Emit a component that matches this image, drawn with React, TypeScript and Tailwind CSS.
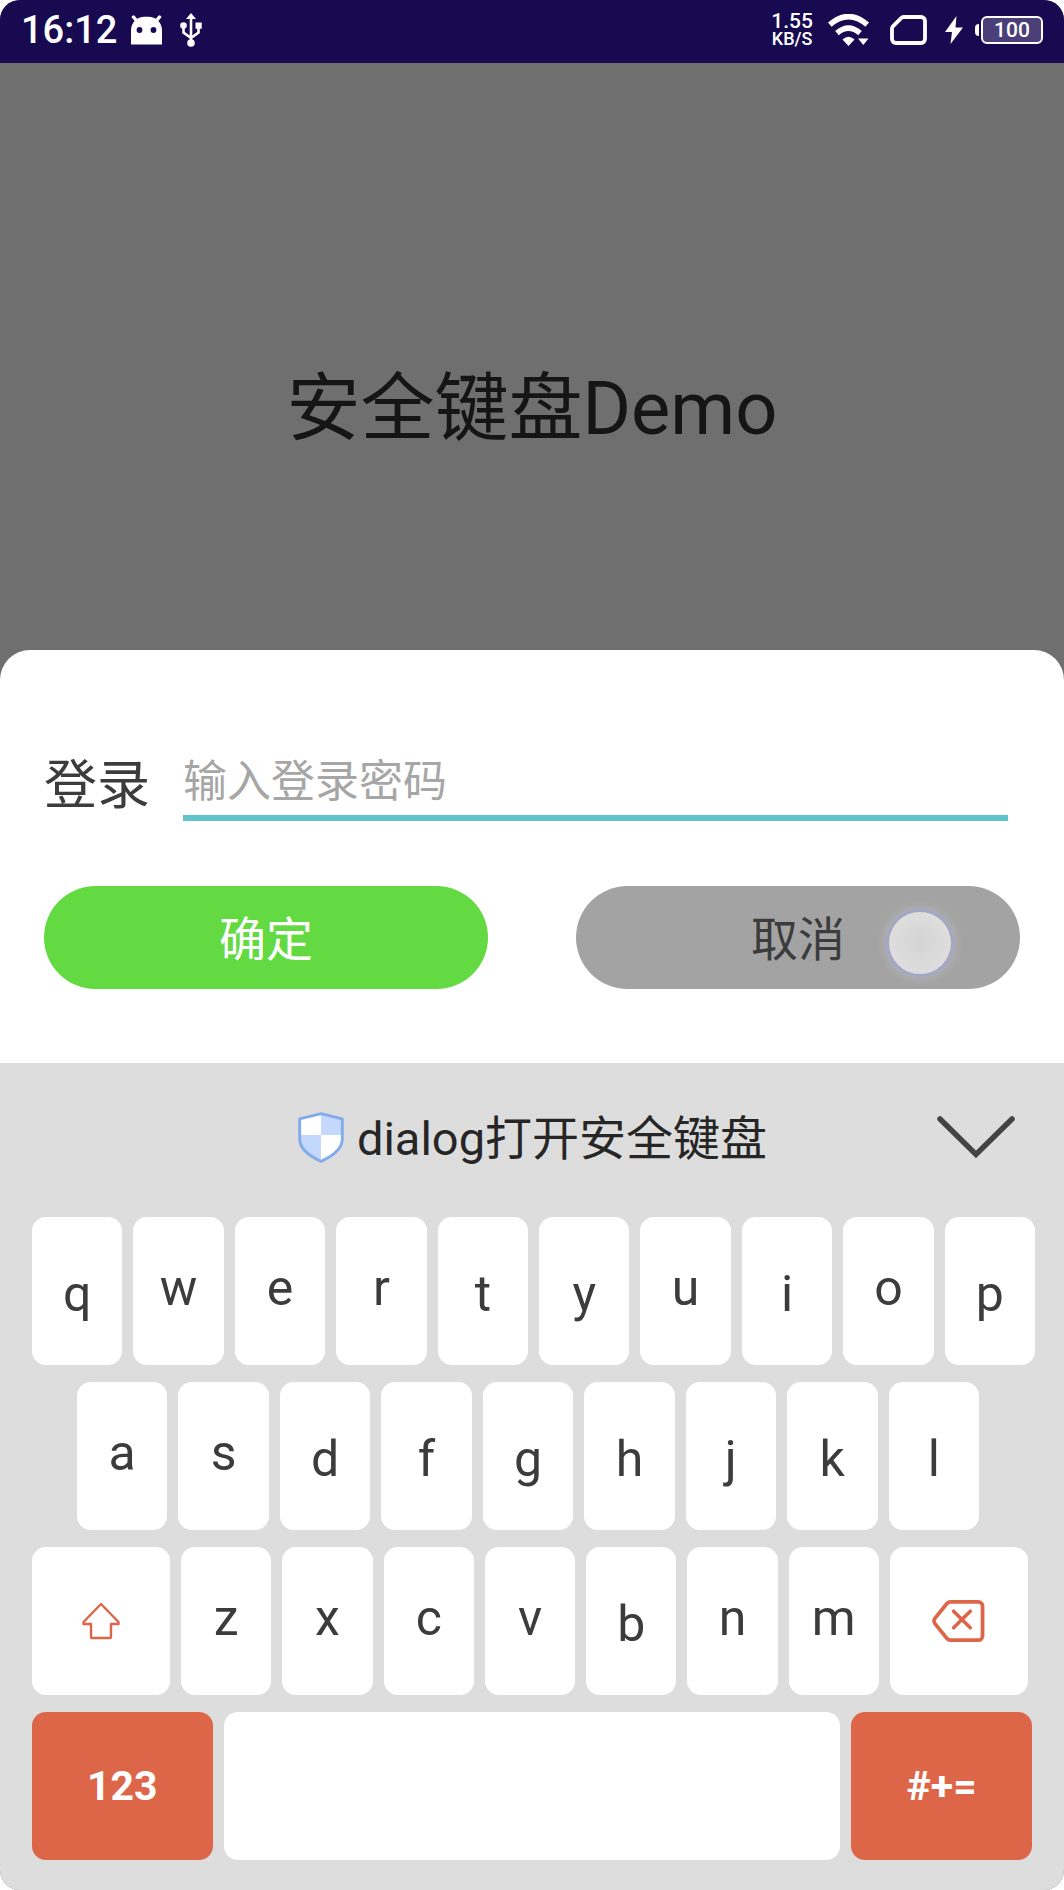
import type { ReactNode } from "react";

const TALL = "qtyipdfghjklb";

function Key({ children, className, label }: { children?: ReactNode; className?: string; label?: string }) {
  return (
    <button
      type="button"
      aria-label={label}
      className={`flex h-[148px] min-w-0 items-center justify-center rounded-[14px] ${className ?? ""}`}
    >
      {children}
    </button>
  );
}

function LetterKey({ letter }: { letter: string }) {
  return (
    <Key
      className={`flex-[85] bg-white text-[50px] leading-[60px] text-[#3c3c3c] ${
        TALL.includes(letter) ? "pt-[6px]" : "pb-[6px]"
      }`}
    >
      {letter}
    </Key>
  );
}

function letters(row: string) {
  return row.split("").map((l) => <LetterKey key={l} letter={l} />);
}

function AndroidIcon() {
  return (
    <svg width="31" height="30" viewBox="0 0 31 30" className="ml-[14px]" aria-hidden="true">
      <path d="M2.500 2 7 7.500M28.500 2 24 7.500" stroke="#fff" strokeWidth="3.400" strokeLinecap="round" />
      <path d="M0 29.500V16C0 9.500 3 5.500 7.500 3 11 1.200 20 1.200 23.500 3 28 5.500 31 9.500 31 16v13.500Z" fill="#fff" />
      <circle cx="8.500" cy="15" r="2.900" fill="#170a50" />
      <circle cx="22.500" cy="15" r="2.900" fill="#170a50" />
    </svg>
  );
}

function UsbIcon() {
  return (
    <svg width="22" height="34" viewBox="0 0 22 34" className="ml-[18px]" fill="none" aria-hidden="true">
      <path d="M11 4v26M3.500 13v6.500l7.500 5.500M18.500 12v7.500l-7.500 5.500" stroke="#fff" strokeWidth="2.600" />
      <path d="m11 0 5 6H6Z" fill="#fff" />
      <circle cx="3.500" cy="12.500" r="3.300" fill="#fff" />
      <path d="M15.500 9.500h6.200v6.200h-6.200Z" fill="#fff" />
      <circle cx="11" cy="30" r="3.800" fill="#fff" />
    </svg>
  );
}

function WifiIcon() {
  return (
    <svg width="42" height="32" viewBox="0 0 42 32" fill="none" className="ml-[15px]" aria-hidden="true">
      <path d="M1.800 10.700Q20.500-5.500 39.200 10.700" stroke="#fff" strokeWidth="5.600" />
      <path d="M9 19.200Q20.500 9.200 32 19.200" stroke="#fff" strokeWidth="5.600" />
      <path d="M14.500 25.500q6-5.500 12 0l-6 6.500Z" fill="#fff" />
      <path d="M30 24.500h10.500L35.300 31Z" fill="#fff" />
    </svg>
  );
}

function SimIcon() {
  return (
    <svg width="37" height="30" viewBox="0 0 37 30" fill="none" className="ml-[20px]" aria-hidden="true">
      <path
        d="M13.500 2H31a4 4 0 0 1 4 4v18a4 4 0 0 1-4 4H6a4 4 0 0 1-4-4V13.500a3 3 0 0 1 .9-2.100l8.500-8.500A3 3 0 0 1 13.500 2Z"
        stroke="#fff"
        strokeWidth="3.800"
      />
    </svg>
  );
}

function BoltIcon() {
  return (
    <svg width="18" height="28" viewBox="0 0 18 28" className="ml-[18px]" aria-hidden="true">
      <path d="M11.500 0 0 16h7l-1.500 12L18 11.500h-7.500Z" fill="#fff" />
    </svg>
  );
}

function ShieldIcon() {
  return (
    <svg width="48" height="52" viewBox="0 0 46 50" aria-hidden="true">
      <defs>
        <clipPath id="shield-clip">
          <path d="M23 3 43 8v19c0 10-10 16-20 21C13 43 3 37 3 27V8Z" />
        </clipPath>
      </defs>
      <g clipPath="url(#shield-clip)">
        <path d="M0 0h46v50H0Z" fill="#fff" />
        <path d="M23 0h23v23H23ZM0 23h23v27H0Z" fill="#c3d8fc" />
      </g>
      <path
        d="M23 2.500 43.500 7.500V27c0 10-9.500 16.500-20.500 21.500C12 43.500 2.500 37 2.500 27V7.500Z"
        fill="none"
        stroke="#82abec"
        strokeWidth="2.800"
        strokeLinejoin="round"
      />
    </svg>
  );
}

export default function App() {
  return (
    <div className="bg-white font-[Roboto,'Noto_Sans_CJK_SC',sans-serif]">
      <div className="flex min-h-screen flex-col overflow-hidden rounded-[20px] bg-[#6f6f6f]">
        <header className="flex h-[63px] items-center bg-[#170a50] pr-[21px] pb-[3px] pl-[21px] text-white">
          <time className="text-[38px] leading-[46px] font-medium">16:12</time>
          <AndroidIcon />
          <UsbIcon />
          <div className="ml-auto flex flex-col items-center font-medium">
            <span className="text-[21px] leading-[17px]">1.55</span>
            <span className="text-[18px] leading-[17px]">KB/S</span>
          </div>
          <WifiIcon />
          <SimIcon />
          <BoltIcon />
          <div className="ml-[12px] flex items-center gap-[2px]">
            <span className="h-[12px] w-[4px] rounded-l-[4px] bg-white" />
            <span className="flex h-[28px] w-[62px] items-center justify-center rounded-[6px] border-2 border-white bg-[#4a3f78] text-[21px] leading-[24px] font-medium">
              100
            </span>
          </div>
        </header>

        <main className="flex-1 pt-[301px] pb-[196px] text-center">
          <h1 className="text-[74px] leading-[90px] text-[#151515]">安全键盘Demo</h1>
        </main>

        <form className="rounded-t-[30px] bg-white pt-[93px] pb-[74px]" onSubmit={(e) => e.preventDefault()}>
          <div className="flex items-center pr-[56px] pl-[44px]">
            <label htmlFor="password" className="mr-[33px] pt-[8px] text-[53px] leading-[64px] text-[#3c3c3c]">
              登录
            </label>
            <input
              id="password"
              type="password"
              placeholder="输入登录密码"
              className="h-[78px] min-w-0 flex-1 border-b-[6px] border-[#5fc4cb] pt-[6px] text-[44px] text-[#3c3c3c] outline-none placeholder:text-[#a6a6a6]"
            />
          </div>
          <div className="mt-[65px] flex gap-[88px] px-[44px]">
            <button
              type="submit"
              className="h-[103px] flex-1 rounded-full bg-[#63da41] pt-[6px] text-[47px] text-white"
            >
              确定
            </button>
            <button
              type="button"
              className="relative h-[103px] flex-1 rounded-full bg-[#a3a3a3] pt-[6px] text-[47px] text-[#3c3c3c]"
            >
              取消
              <span className="absolute top-[26px] right-[69px] size-[62px] rounded-full bg-radial from-[#d4d4d4] to-[#e2e2e2] shadow-[0_0_3px_3px_#a3a6c6,0_0_10px_5px_#b4b4b8]" />
            </button>
          </div>
        </form>

        <section aria-label="安全键盘" className="bg-[#ddd] pb-[30px]">
          <div className="relative flex h-[154px] items-center justify-center gap-[12px] pb-[6px]">
            <ShieldIcon />
            <h2 className="pt-[4px] text-[47px] leading-[60px] text-[#262626]">dialog打开安全键盘</h2>
            <button type="button" aria-label="收起键盘" className="absolute top-[52px] right-[48px]">
              <svg width="80" height="44" viewBox="0 0 80 44" fill="none" aria-hidden="true">
                <path d="m4 4 36 35.500L76 4" stroke="#444" strokeWidth="5.500" strokeLinecap="round" />
              </svg>
            </button>
          </div>

          <div className="flex flex-col gap-[17px]">
            <div className="flex gap-[11px] pr-[29px] pl-[32px]">{letters("qwertyuiop")}</div>
            <div className="flex gap-[11px] pr-[85px] pl-[77px]">{letters("asdfghjkl")}</div>
            <div className="flex gap-[11px] pr-[36px] pl-[32px]">
              <Key label="Shift" className="flex-[130] bg-white">
                <svg width="38" height="38" viewBox="0 0 38 38" fill="none" aria-hidden="true">
                  <path
                    d="M19 2 1.500 20v2H9v13a1 1 0 0 0 1 1h18a1 1 0 0 0 1-1V22h7.500v-2Z"
                    stroke="#dd6649"
                    strokeWidth="2.400"
                    strokeLinejoin="round"
                  />
                </svg>
              </Key>
              {letters("zxcvbnm")}
              <Key label="Backspace" className="flex-[130] bg-white">
                <svg width="53" height="44" viewBox="0 0 54 44" fill="none" aria-hidden="true">
                  <path
                    d="M19 2.500H47a4.500 4.500 0 0 1 4.500 4.500v30a4.500 4.500 0 0 1-4.500 4.500H19a5 5 0 0 1-3.800-1.700L3.200 25a4.500 4.500 0 0 1 0-6L15.200 4.200A5 5 0 0 1 19 2.500Z"
                    stroke="#dd6649"
                    strokeWidth="3.800"
                  />
                  <path d="m22 12 17 17M39 12 22 29" stroke="#dd6649" strokeWidth="3.600" strokeLinecap="round" />
                </svg>
              </Key>
            </div>
            <div className="flex gap-[11px] pr-[32px] pl-[32px]">
              <Key className="flex-[170] bg-[#dd6649] pt-[2px] text-[41px] font-bold text-white">123</Key>
              <Key label="Space" className="flex-[580] bg-white" />
              <Key className="flex-[170] bg-[#dd6649] pt-[2px] text-[41px] font-bold text-white">#+=</Key>
            </div>
          </div>
        </section>
      </div>
    </div>
  );
}
